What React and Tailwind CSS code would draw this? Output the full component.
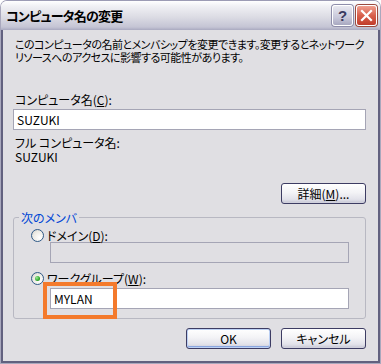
import React from 'react';

const font = "font-['MS_UI_Gothic','Noto_Sans_CJK_JP',sans-serif] [font-feature-settings:'palt']";

const XpButton = ({ children, isDefault }) => (
  <button
    className={`w-[85px] h-[21px] rounded-[3px] border border-[#3d3c63] text-[12px] leading-none text-black bg-[linear-gradient(to_bottom,#ffffff_0%,#f3f3f6_45%,#e2e2ea_80%,#c9c9d6_100%)] ${
      isDefault ? 'shadow-[inset_0_0_0_1px_#bcd0f4,inset_0_-1px_0_1px_#8aa6e0]' : 'shadow-[inset_0_-2px_0_#d0d0dc]'
    }`}
  >
    {children}
  </button>
);

const Radio = ({ checked }) => (
  <span className="w-[13px] h-[13px] rounded-full border border-[#2f5a87] bg-[radial-gradient(circle_at_70%_70%,#ffffff_0%,#eceae4_60%,#c8c6c0_100%)] flex items-center justify-center shrink-0">
    {checked && <span className="w-[5px] h-[5px] rounded-full bg-[radial-gradient(circle_at_35%_35%,#9ee89a_0%,#2ea82a_60%,#1a7a18_100%)]" />}
  </span>
);

export default function App() {
  return (
    <div className={`w-[381px] h-[364px] bg-white ${font}`}>
      <div className="w-[381px] h-[364px] flex flex-col rounded-t-[7px] overflow-hidden border border-[#a9a8bd] border-t-[#9c9bb4]">
        {/* Title bar */}
        <div className="h-[29px] shrink-0 flex items-center justify-between pl-[5px] pr-[3px] bg-[linear-gradient(to_bottom,#ffffff_0%,#f0f0f4_18%,#dcdce4_55%,#c4c4d4_90%,#a9a9c0_100%)]">
          <span className="text-[13px] font-bold text-black tracking-[-0.8px]">コンピュータ名の変更</span>
          <div className="flex gap-[3px]">
            <div className="w-[21px] h-[21px] rounded-[3px] border border-white shadow-[0_0_0_1px_#8e8daa] bg-[linear-gradient(to_bottom,#e8e8f0_0%,#c8c8da_60%,#a8a8c0_100%)] flex items-center justify-center">
              <span className="text-[15px] font-bold text-[#3a3a60] leading-none font-['Liberation_Sans',sans-serif]">?</span>
            </div>
            <div className="w-[21px] h-[21px] rounded-[3px] border border-white shadow-[0_0_0_1px_#9a4a3e] bg-[linear-gradient(to_bottom,#f0a090_0%,#d8604c_50%,#c03c2c_100%)] flex items-center justify-center">
              <svg width="13" height="13" viewBox="0 0 13 13">
                <path d="M2 2 L11 11 M11 2 L2 11" stroke="white" strokeWidth="2.2" strokeLinecap="square" />
              </svg>
            </div>
          </div>
        </div>

        {/* Body */}
        <div className="flex-1 flex flex-col bg-[#e0dfe3] border-x-2 border-b-2 border-[#62617f] pl-[10px] pr-[12px] text-[12px] leading-[13px] text-black">
          <p className="mt-[8px] ml-[2px] whitespace-nowrap text-[11px] leading-[13px] tracking-[-0.5px]">
            このコンピュータの名前とメンバシップを変更できます。変更するとネットワーク
            <br />
            リソースへのアクセスに影響する可能性があります。
          </p>

          <p className="mt-[29px] ml-[2px]">
            コンピュータ名(<u className="underline-offset-1">C</u>):
          </p>
          <div className="mt-[3px] h-[21px] border border-[#a5a5b5] bg-white flex items-center pl-[3px]">SUZUKI</div>

          <p className="mt-[6px] ml-[2px] leading-[14px]">フル コンピュータ名:</p>
          <p className="ml-[2px] leading-[14px]">SUZUKI</p>

          <div className="mt-[19px] flex justify-end">
            <XpButton>
              詳細(<u className="underline-offset-1">M</u>)...
            </XpButton>
          </div>

          <fieldset className="mt-[7px] border border-[#b8b8c2] rounded-[3px] pb-[9px] pr-[16px]">
            <legend className="ml-[5px] px-[2px] text-[#0046d5]">次のメンバ</legend>
            <div className="mt-[4px] ml-[17px] h-[14px] flex items-center gap-[3px]">
              <Radio />
              <span>
                ドメイン(<u className="underline-offset-1">D</u>):
              </span>
            </div>
            <div className="ml-[36px] h-[21px] border border-[#a5a5b5] bg-[#e0dfe3]" />
            <div className="mt-[8px] ml-[17px] h-[14px] flex items-center gap-[3px]">
              <Radio checked />
              <span>
                ワークグループ(<u className="underline-offset-1">W</u>):
              </span>
            </div>
            <div className="relative mt-[3px] ml-[36px] h-[21px] border border-[#a5a5b5] bg-white flex items-center pl-[3px]">
              MYLAN
              <div className="absolute left-[-8px] top-[-7px] w-[74px] h-[37px] border-[4px] border-[#f47a2c]" />
            </div>
          </fieldset>

          <div className="mt-[9px] flex justify-end gap-[10px]">
            <XpButton isDefault>OK</XpButton>
            <XpButton>キャンセル</XpButton>
          </div>
        </div>
      </div>
    </div>
  );
}
